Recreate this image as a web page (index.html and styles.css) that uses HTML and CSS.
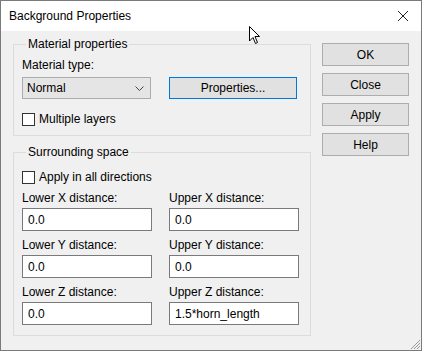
FILE: index.html
```html
<!doctype html>
<html lang="en">
  <head>
    <meta charset="UTF-8" />
    <title>Background Properties</title>
    <link rel="stylesheet" href="styles.css">
  </head>
  <body>
    <div class="window">
      <div class="titlebar">
        <span class="title">Background Properties</span>
        <svg class="close" width="12" height="12" viewBox="0 0 12 12">
          <path d="M1 1 L11 11 M11 1 L1 11" stroke="#222" stroke-width="1" fill="none" />
        </svg>
      </div>

      <div class="content">
        <div class="groups">
          <fieldset class="group material">
            <legend>Material properties</legend>
            <div class="label">Material type:</div>
            <div class="row">
              <div class="select">
                <span>Normal</span>
                <svg width="9" height="5" viewBox="0 0 9 5">
                  <path d="M0.5 0.5 L4.5 4.5 L8.5 0.5" stroke="#444" stroke-width="1" fill="none" />
                </svg>
              </div>
              <button class="btn default">Properties...</button>
            </div>
            <label class="check"><span class="box"></span>Multiple layers</label>
          </fieldset>

          <fieldset class="group space">
            <legend>Surrounding space</legend>
            <label class="check"><span class="box"></span>Apply in all directions</label>
            <div class="fields">
              <div class="field">
                <div class="label">Lower X distance:</div>
                <input class="text" type="text" value="0.0" />
              </div>
              <div class="field">
                <div class="label">Upper X distance:</div>
                <input class="text" type="text" value="0.0" />
              </div>
              <div class="field">
                <div class="label">Lower Y distance:</div>
                <input class="text" type="text" value="0.0" />
              </div>
              <div class="field">
                <div class="label">Upper Y distance:</div>
                <input class="text" type="text" value="0.0" />
              </div>
              <div class="field">
                <div class="label">Lower Z distance:</div>
                <input class="text" type="text" value="0.0" />
              </div>
              <div class="field">
                <div class="label">Upper Z distance:</div>
                <input class="text" type="text" value="1.5*horn_length" />
              </div>
            </div>
          </fieldset>
        </div>

        <div class="buttons">
          <button class="btn">OK</button>
          <button class="btn">Close</button>
          <button class="btn">Apply</button>
          <button class="btn">Help</button>
        </div>
      </div>

      <svg class="grip" width="12" height="12" viewBox="0 0 12 12">
        <path d="M11 2 L2 11 M11 5 L5 11 M11 8 L8 11" stroke="#999" stroke-width="1" fill="none" />
      </svg>

      <svg class="cursor" width="12" height="19" viewBox="0 0 12 19">
        <path d="M0.5 0.5 L0.5 15 L4 11.5 L6.5 17.5 L8.5 16.5 L6 10.5 L10.5 10.5 Z" fill="#fff" stroke="#000" stroke-width="1" stroke-linejoin="miter" />
      </svg>
    </div>
  </body>
</html>
```

FILE: styles.css
```css
body {
  margin: 0;
  font-family: "Liberation Sans", Arial, sans-serif;
  font-size: 12px;
  color: #000;
}
.window {
  position: relative;
  width: 422px;
  height: 351px;
  box-sizing: border-box;
  border: 1px solid #7a7a7a;
  background: #f0f0f0;
}
.titlebar {
  height: 30px;
  background: #fff;
  display: flex;
  align-items: center;
  justify-content: space-between;
  padding: 0 12px 0 8px;
}
.title {
  font-size: 12px;
}
.content {
  display: flex;
  gap: 11px;
  padding: 6px 12px 0 12px;
}
.groups {
  width: 298px;
  display: flex;
  flex-direction: column;
  gap: 9px;
}
.group {
  margin: 0;
  border: 1px solid #dcdcdc;
  padding: 7px 8px 9px 8px;
}
.group legend {
  padding: 0 2px;
  margin-left: 4px;
  line-height: 14px;
}
.group.space {
  padding-top: 11px;
  padding-bottom: 10px;
}
.label {
  line-height: 14px;
}
.row {
  display: flex;
  gap: 18px;
  margin-top: 5px;
}
.select {
  width: 129px;
  height: 22px;
  box-sizing: border-box;
  border: 1px solid #acacac;
  background: #e5e5e5;
  display: flex;
  align-items: center;
  justify-content: space-between;
  padding: 0 6px 0 4px;
}
.check {
  display: flex;
  align-items: center;
  gap: 4px;
  line-height: 14px;
}
.material .check {
  margin-top: 13px;
}
.box {
  width: 13px;
  height: 13px;
  box-sizing: border-box;
  border: 1px solid #333;
  background: #fff;
}
.fields {
  display: grid;
  grid-template-columns: 130px 130px;
  column-gap: 17px;
  row-gap: 7px;
  margin-top: 7px;
}
.field .label {
  margin-bottom: 3px;
}
.text {
  display: block;
  width: 130px;
  height: 23px;
  box-sizing: border-box;
  margin: 0;
  border: 1px solid #7a7a7a;
  background: #fff;
  padding: 0 5px;
  font-family: "Liberation Sans", Arial, sans-serif;
  font-size: 12px;
  color: #000;
}
.btn {
  height: 23px;
  box-sizing: border-box;
  margin: 0;
  border: 1px solid #adadad;
  background: #e1e1e1;
  font-family: "Liberation Sans", Arial, sans-serif;
  font-size: 12px;
  color: #000;
  padding: 0;
}
.btn.default {
  width: 128px;
  height: 22px;
  border-color: #0078d7;
}
.buttons {
  width: 87px;
  display: flex;
  flex-direction: column;
  gap: 7px;
  padding-top: 6px;
}
.grip {
  position: absolute;
  right: 0;
  bottom: 0;
}
.cursor {
  position: absolute;
  left: 248px;
  top: 25px;
}
```
